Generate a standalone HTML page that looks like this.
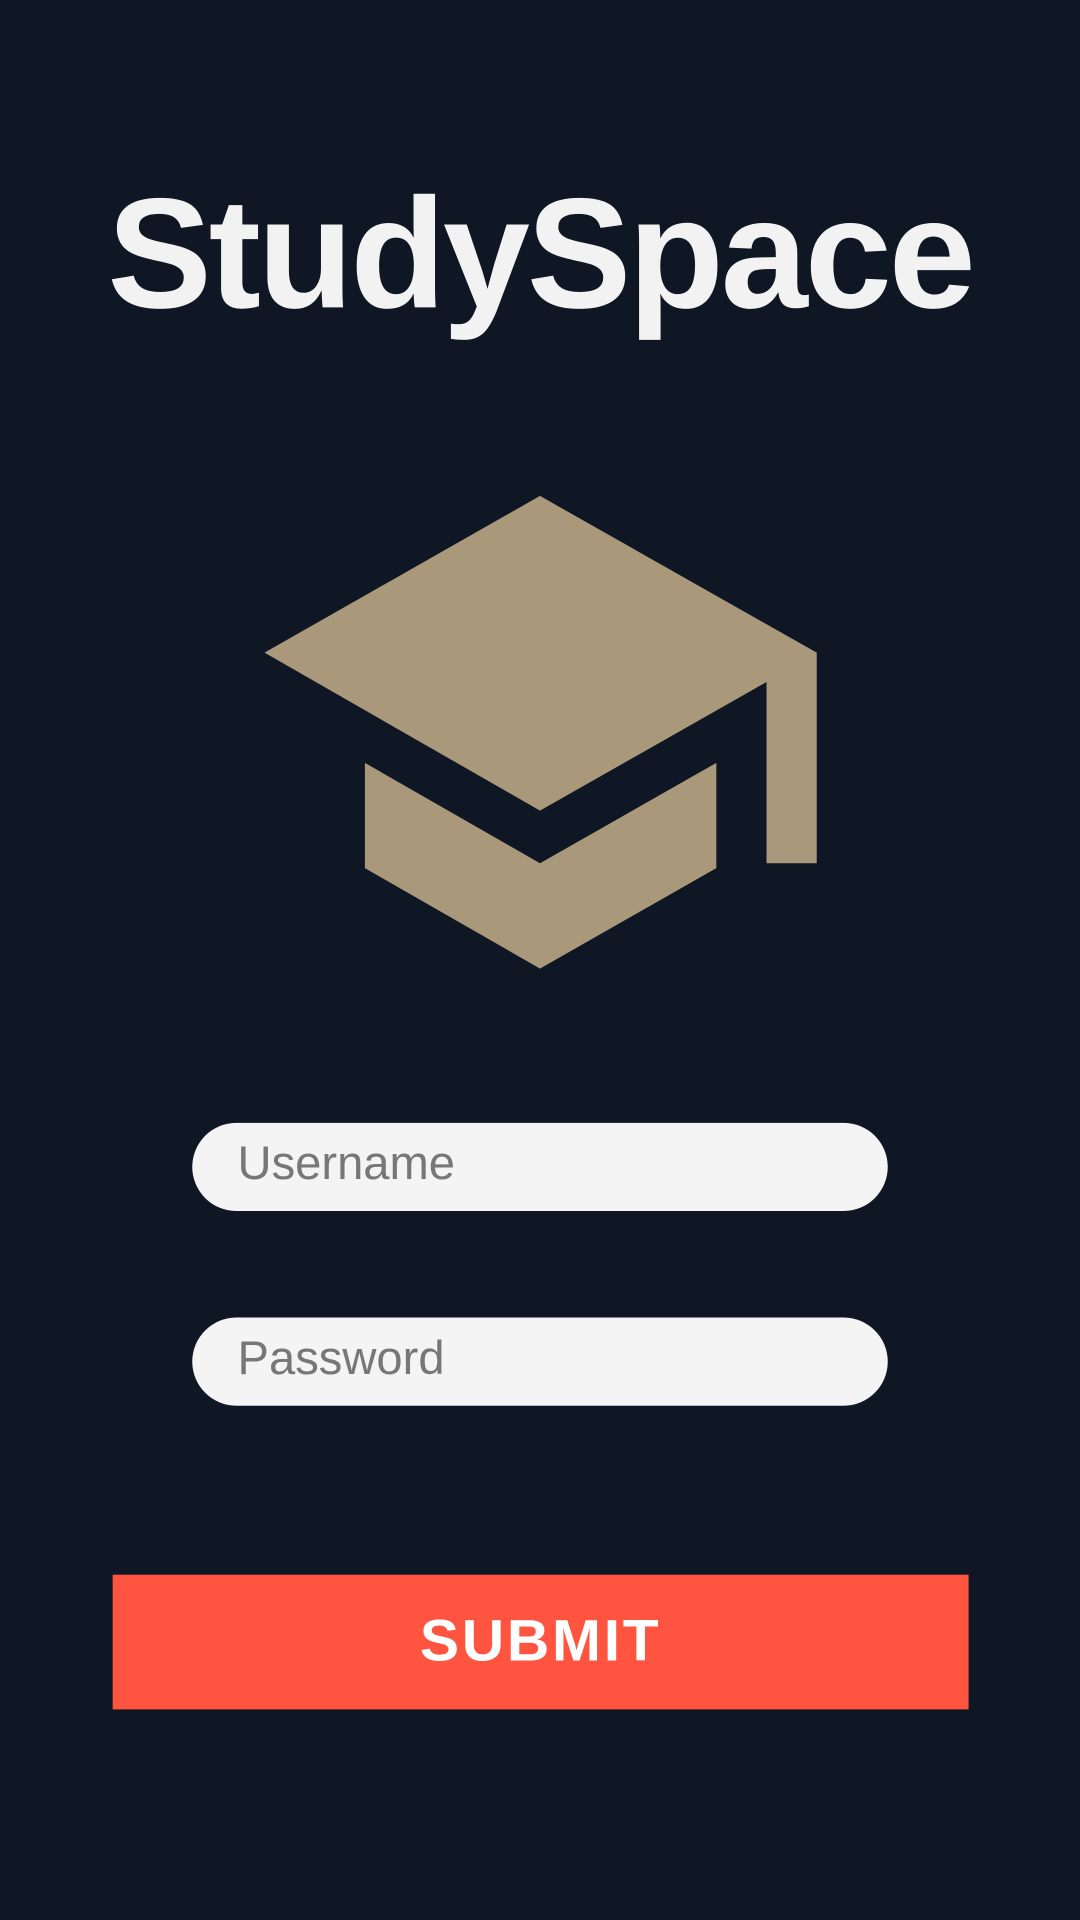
<!DOCTYPE html>
<html><head><meta charset="utf-8"><style>
html,body{margin:0;padding:0;background:#0f1624;width:1080px;height:1920px;overflow:hidden}
#w{position:absolute;left:0;top:0;width:882px;height:1568px;transform:scale(1.22449);transform-origin:0 0;font-family:"Liberation Sans",Arial,sans-serif}
.t{position:absolute;left:0;width:882px;top:138px;text-align:center;color:#f2f2f2;font-weight:bold;font-size:128px;letter-spacing:-2.6px;line-height:140px}
.in{position:absolute;left:157px;width:568px;height:72px;background:#f4f4f4;border-radius:36px;box-sizing:border-box;padding-left:37px;color:#777;font-size:38.5px;line-height:68px}
.b{position:absolute;left:92px;top:1286px;width:699px;height:110px;background:#ff5540;color:#fff;font-weight:bold;font-size:48px;text-align:center;line-height:110px;letter-spacing:2.2px}
</style></head><body><div id="w">
<div class="t">StudySpace</div>
<svg style="position:absolute;left:0;top:0" width="882" height="1568">
<polygon fill="#aa987a" points="441,405 216,533 441,662 626,557 626,705 667,705 667,533"/>
<polygon fill="#aa987a" points="298,623 441,705 585,623 585,709 441,791 298,709"/>
</svg>
<div class="in" style="top:917px">Username</div>
<div class="in" style="top:1076px">Password</div>
<div class="b">SUBMIT</div>
</div></body></html>
